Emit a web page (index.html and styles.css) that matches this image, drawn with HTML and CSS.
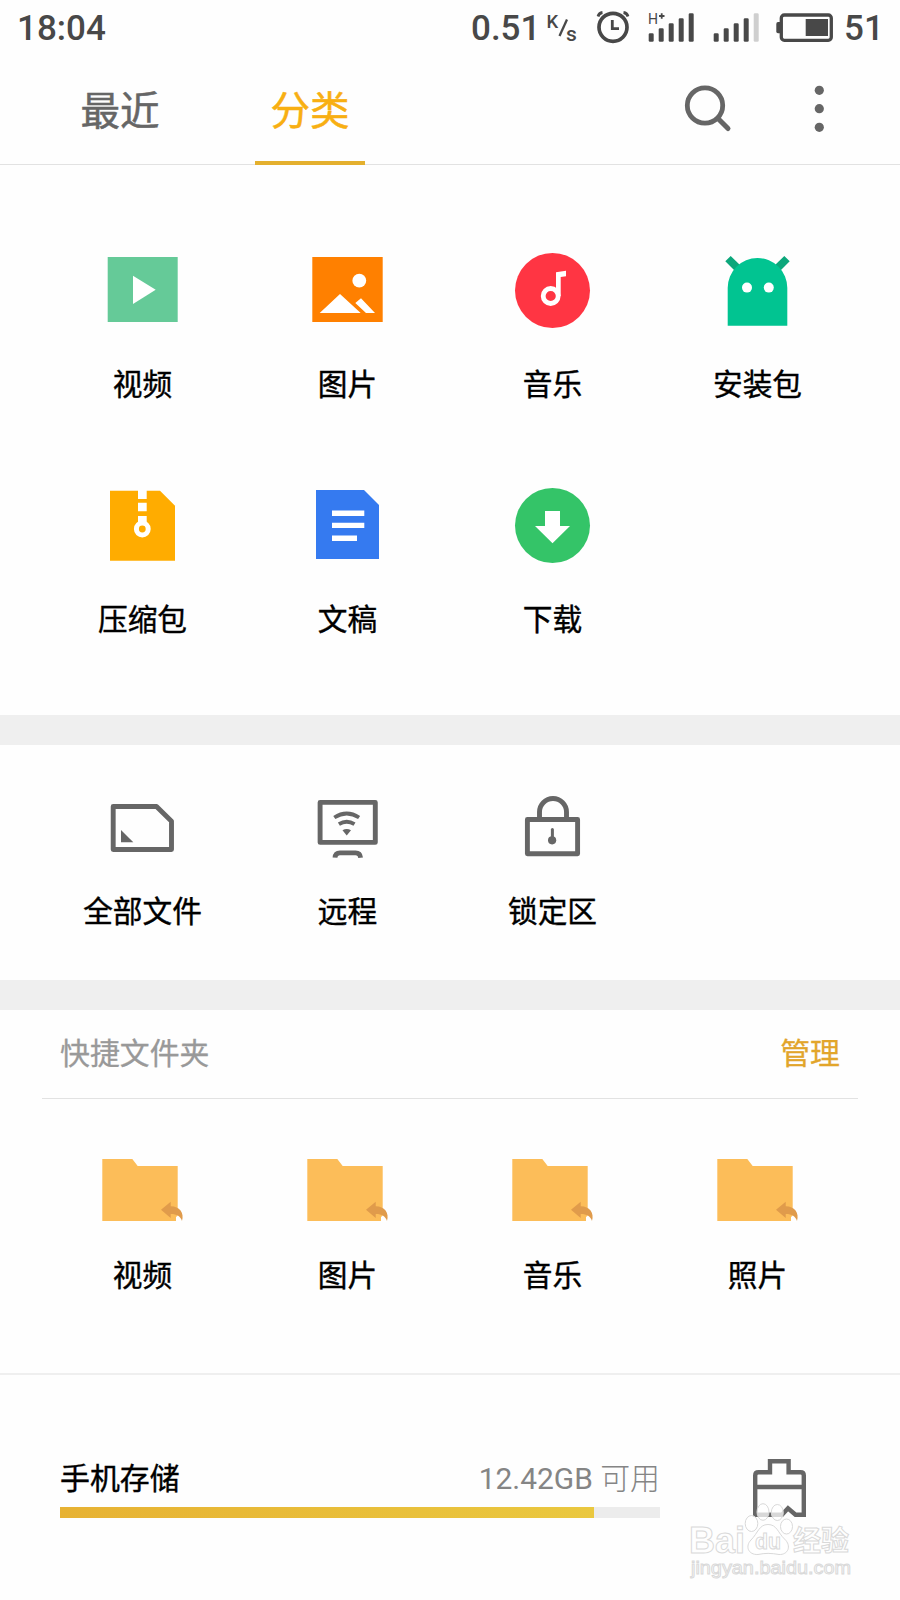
FILE: index.html
```html
<!DOCTYPE html>
<html lang="zh-CN">
<head>
<meta charset="utf-8">
<title>文件管理</title>
<link rel="stylesheet" href="styles.css">
</head>
<body>
<svg class="defs" width="0" height="0" aria-hidden="true">
  <symbol id="folder" viewBox="0 0 101 100">
    <path fill="#fcbd59" d="M10.300 19H40.300L45.700 26H85.700V81H10.300Z"/>
    <path fill="#fff" d="M84 77L86 75.500L90 81.500H84Z"/>
    <path fill="#e09b4b" d="M69 69.800L78.700 61.700V66.300C87.500 66.300 92.500 73 90 81C88.500 76.300 85 74 78.700 74V78Z"/>
  </symbol>
</svg>
<div class="screen">
  <header class="status">
    <span class="clock">18:04</span>
    <div class="status-right">
      <span class="rate">0.51</span>
      <svg width="46" height="56" viewBox="540 0 46 56">
        <text class="unit" x="546.500" y="27.500" font-size="18.500">K</text>
        <path d="M559.500 36L567 19.500" stroke="#484848" stroke-width="2.300"/>
        <text class="unit" x="566" y="40.500" font-size="21">s</text>
      </svg>
      <svg width="54" height="56" viewBox="586 0 54 56" fill="none" stroke="#484848">
        <circle cx="613" cy="27.300" r="14" stroke-width="3.700"/>
        <path d="M612.300 20V28.700H619" stroke-width="2.800"/>
        <path d="M598 16.500Q599 13 602.500 12.500M623.500 12.500Q627 13 628 16.500" stroke-width="2.800"/>
      </svg>
      <svg width="64" height="56" viewBox="640 0 64 56" fill="#484848">
        <text class="unit-thin" x="648" y="23.500" font-size="14">H</text>
        <path d="M659 16H664.500M661.700 13.200V18.700" stroke="#484848" stroke-width="1.800"/>
        <rect x="648.700" y="33.300" width="5" height="8.500" rx="1.300"/>
        <rect x="658.700" y="28.300" width="5" height="13.500" rx="1.300"/>
        <rect x="668.700" y="23.300" width="5" height="18.500" rx="1.300"/>
        <rect x="678.700" y="18.300" width="5" height="23.500" rx="1.300"/>
        <rect x="688.700" y="13.300" width="5" height="28.500" rx="1.300"/>
      </svg>
      <svg width="66" height="56" viewBox="704 0 66 56" fill="#484848">
        <rect x="713.700" y="33.300" width="5" height="8.500" rx="1.300"/>
        <rect x="723.700" y="28.300" width="5" height="13.500" rx="1.300"/>
        <rect x="733.700" y="23.300" width="5" height="18.500" rx="1.300"/>
        <rect x="743.700" y="18.300" width="5" height="23.500" rx="1.300"/>
        <rect x="753.700" y="13.300" width="5" height="28.500" rx="1.300" fill="#cfcfcf"/>
      </svg>
      <svg width="74" height="56" viewBox="770 0 74 56" fill="#484848">
        <rect x="781.300" y="15" width="50" height="25.300" rx="3" fill="none" stroke="#484848" stroke-width="3.300"/>
        <path d="M781 22H778Q776.300 22 776.300 24V31.500Q776.300 33.300 778 33.300H781Z"/>
        <rect x="805.700" y="19" width="22.300" height="17"/>
      </svg>
      <span class="battery">51</span>
    </div>
  </header>

  <nav class="tabs">
    <div class="tab tab-recent">最近</div>
    <div class="tab tab-active">分类</div>
    <div class="actions">
      <svg width="60" height="60" viewBox="680 80 60 60" fill="none" stroke="#666">
        <circle cx="705" cy="105.500" r="17.700" stroke-width="4.800"/>
        <path d="M718 118.500L728 128.500" stroke-width="5" stroke-linecap="round"/>
      </svg>
      <svg width="20" height="60" viewBox="809 80 20 60" fill="#666">
        <circle cx="819.300" cy="90.300" r="4.600"/><circle cx="819.300" cy="108.700" r="4.600"/><circle cx="819.300" cy="127.300" r="4.600"/>
      </svg>
    </div>
  </nav>

  <section class="grid categories">
    <div class="item">
      <svg class="icon" viewBox="0 0 101 100"><path fill="#65ca98" d="M15.700 17H85.700V82H15.700Z"/><path fill="#fff" d="M41 35.700V64L63.700 49.700Z"/></svg>
      <span class="label">视频</span>
    </div>
    <div class="item">
      <svg class="icon" viewBox="0 0 101 100"><path fill="#ff8000" d="M15.300 17H85.700V82H15.300Z"/><g fill="#fff"><circle cx="62.300" cy="40.700" r="6.900"/><path d="M22.700 73L43 54L63.700 73ZM58.300 63L64 58.300L78 73H69Z"/></g></svg>
      <span class="label">图片</span>
    </div>
    <div class="item">
      <svg class="icon" viewBox="0 0 101 100"><circle cx="50.500" cy="50.500" r="37.500" fill="#ff3543"/><circle cx="48.700" cy="56" r="7.500" fill="none" stroke="#fff" stroke-width="4.800"/><path fill="#fff" d="M54 32.300L64 30.700V36.300L58.700 37V56H54Z"/></svg>
      <span class="label">音乐</span>
    </div>
    <div class="item">
      <svg class="icon" viewBox="0 0 101 100"><path fill="#0ca77b" d="M18.300 21.300L23.700 16L33 25L27.500 30.500ZM82.700 21.300L77.300 16L68 25L73.500 30.500Z"/><path fill="#01c491" d="M20.700 85.700V47.800A29.800 29.800 0 0 1 80.300 47.800V85.700Z"/><g fill="#fff"><circle cx="40" cy="47.600" r="5"/><circle cx="61.800" cy="47.600" r="5"/></g></svg>
      <span class="label">安装包</span>
    </div>
    <div class="item">
      <svg class="icon" viewBox="0 0 101 100"><path fill="#ffac00" d="M18 15.700H68L83 30.700V85.700H18Z"/><path fill="#fff" d="M46 15H54.700V24H46ZM46 27.800H54.700V36.300H46ZM46 41H54.700V50H46Z"/><circle cx="50.300" cy="54" r="5.900" fill="#ffac00" stroke="#fff" stroke-width="5"/></svg>
      <span class="label">压缩包</span>
    </div>
    <div class="item">
      <svg class="icon" viewBox="0 0 101 100"><path fill="#357af0" d="M19 15H67L82 30V84H19Z"/><path fill="#fff" d="M35 35.500H67.300V41H35ZM35 47.700H67.300V53H35ZM35 60.500H60V66H35Z"/></svg>
      <span class="label">文稿</span>
    </div>
    <div class="item">
      <svg class="icon" viewBox="0 0 101 100"><circle cx="50.500" cy="50.500" r="37.500" fill="#34c468"/><path fill="#fff" d="M43 36H58V51H68L50.500 68.300L33 51H43Z"/></svg>
      <span class="label">下载</span>
    </div>
  </section>

  <section class="grid places">
    <div class="item">
      <svg class="icon" viewBox="0 0 101 100"><path fill="none" stroke="#666" stroke-width="4.900" stroke-linejoin="round" d="M21.200 26.500H64.500L79.500 41.300V69.500H21.200Z"/><path fill="#666" d="M29 50V62.300H41.300Z"/></svg>
      <span class="label">全部文件</span>
    </div>
    <div class="item">
      <svg class="icon" viewBox="0 0 101 100" fill="none" stroke="#666"><rect x="23.100" y="22.400" width="55.200" height="40" stroke-width="4.900" stroke-linejoin="round"/><path stroke-width="3.800" d="M37.300 37.500Q49.700 29.500 62.100 37.500M41.900 44.200Q49.700 39.300 57.500 44.200"/><path fill="#666" stroke="none" d="M45.500 50.300Q49.700 47.800 54 50.300L49.700 55.500Z"/><path stroke-width="4.800" d="M38 77.700Q38.300 72.800 43 72.800H58.500Q63.200 72.800 63.600 77.700"/></svg>
      <span class="label">远程</span>
    </div>
    <div class="item">
      <svg class="icon" viewBox="0 0 101 100" fill="none" stroke="#666" stroke-width="4.900"><rect x="25.400" y="39.500" width="50.200" height="34.200" stroke-linejoin="round"/><path d="M37.500 39V32A13.500 13.500 0 0 1 64.500 32V39"/><path stroke-width="3" stroke-linecap="round" d="M50.400 49.500V60"/><circle cx="50.100" cy="60.300" r="4.100" fill="#666" stroke="none"/></svg>
      <span class="label">锁定区</span>
    </div>
  </section>

  <section class="shortcuts">
    <div class="shortcuts-head">
      <span>快捷文件夹</span>
      <span class="manage">管理</span>
    </div>
    <div class="grid folders">
      <div class="item"><svg class="icon"><use href="#folder"/></svg><span class="label">视频</span></div>
      <div class="item"><svg class="icon"><use href="#folder"/></svg><span class="label">图片</span></div>
      <div class="item"><svg class="icon"><use href="#folder"/></svg><span class="label">音乐</span></div>
      <div class="item"><svg class="icon"><use href="#folder"/></svg><span class="label">照片</span></div>
    </div>
  </section>

  <footer class="storage">
    <div class="storage-info">
      <div class="storage-text">
        <span class="storage-name">手机存储</span>
        <span class="storage-free">12.42GB <span class="thin">可用</span></span>
      </div>
      <div class="bar"><div class="bar-fill" style="width:89%"></div></div>
    </div>
    <svg class="clean" width="60" height="64" viewBox="750 1456 60 64" fill="none" stroke="#666" stroke-width="4.400">
      <path d="M755.200 1516.700V1475.500Q755.200 1472.300 758.500 1472.300H770V1461.200H788.600V1472.300H800.500Q803.800 1472.300 803.800 1475.500V1514.700H795.500L788 1508.300L782 1514.700H755.200M755.200 1487H803.800"/>
    </svg>
    <svg class="watermark" width="170" height="84" viewBox="686 1500 170 84">
      <g fill="#fff" fill-opacity=".75" stroke="#d9d9d9" stroke-width="1">
        <ellipse cx="751.500" cy="1523.500" rx="6.300" ry="8"/>
        <ellipse cx="763" cy="1512" rx="6" ry="8.300"/>
        <ellipse cx="777.300" cy="1512.500" rx="6" ry="8"/>
        <ellipse cx="786.500" cy="1526.500" rx="6" ry="7.500"/>
        <path d="M768 1524.500C777 1524.500 778 1533 784.500 1539C792 1546 788 1555 779 1554.500C771 1553 765 1553 758 1554.500C748 1555 745 1546 751 1540C758 1533 759 1524.500 768 1524.500Z"/>
        <text class="mark-bold" x="689" y="1553" font-size="37" textLength="56" lengthAdjust="spacingAndGlyphs">Bai</text>
        <text class="mark-bold" x="755" y="1549" font-size="22" textLength="26" lengthAdjust="spacingAndGlyphs">du</text>
        <text class="mark-cjk" x="793" y="1550.500" font-size="28" textLength="56" lengthAdjust="spacingAndGlyphs">经验</text>
        <text class="mark-url" x="691" y="1574" font-size="19" textLength="160" lengthAdjust="spacingAndGlyphs">jingyan.baidu.com</text>
      </g>
    </svg>
  </footer>
</div>
</body>
</html>
```
FILE: styles.css
```css
* {
  box-sizing: border-box;
}

body {
  margin: 0;
  background: #fefefe;
  font-family: Roboto, "Noto Sans CJK SC", sans-serif;
}

svg {
  display: block;
  flex: none;
}

.defs {
  position: absolute;
}

.screen {
  position: relative;
  width: 900px;
  height: 1600px;
  overflow: hidden;
  background: #fefefe;
}

/* Status bar */
.status {
  display: flex;
  justify-content: space-between;
  height: 56px;
  padding: 0 18px 0 17px;
  color: #484848;
  font-size: 35px;
  font-weight: 500;
  line-height: 58px;
}

.status-right {
  display: flex;
}

.rate {
  width: 69px;
}

.battery {
  width: 38px;
}

.unit,
.unit-thin {
  font-family: Roboto, sans-serif;
  font-weight: 500;
  fill: #484848;
}

.unit-thin {
  font-weight: 400;
}

/* Tabs */
.tabs {
  display: flex;
  height: 109px;
  padding-left: 65px;
  border-bottom: 1px solid #e2e2e2;
  color: #666;
  font-size: 39.5px;
  line-height: 112px;
}

.tab {
  width: 110px;
  height: 109px;
  text-align: center;
  -webkit-text-stroke: 0.5px currentColor;
}

.tab-active {
  margin-left: 80px;
  border-bottom: 4px solid #e4b02e;
  color: #f8af12;
}

.actions {
  display: flex;
  gap: 69px;
  margin-left: auto;
  padding: 24px 71px 0 0;
}

/* Icon grids */
.grid {
  display: grid;
  grid-template-columns: repeat(4, 205px);
  padding: 0 40px;
}

.item {
  display: flex;
  flex-direction: column;
  align-items: center;
}

.icon {
  width: 101px;
  height: 100px;
}

.label {
  margin-top: 25px;
  color: #000;
  font-size: 29.7px;
  line-height: 40px;
  -webkit-text-stroke: 0.4px currentColor;
}

.categories {
  grid-auto-rows: 235px;
  height: 550px;
  padding-top: 75px;
}

.places {
  height: 295px;
  padding-top: 35px;
  border-top: 30px solid #efefef;
  border-bottom: 30px solid #efefef;
}

.places .label {
  margin-top: 12px;
}

/* Shortcut folders */
.shortcuts {
  height: 365px;
  border-bottom: 2px solid #efefef;
}

.shortcuts-head {
  display: flex;
  justify-content: space-between;
  height: 89px;
  margin: 0 42px;
  padding: 0 18px;
  border-bottom: 1px solid #e2e2e2;
  color: #999;
  font-size: 29.9px;
  line-height: 88px;
  -webkit-text-stroke: 0.3px currentColor;
}

.manage {
  color: #e2a52b;
}

.folders {
  padding-top: 41px;
}

.folders .label {
  margin-top: 16px;
}

/* Storage */
.storage {
  display: flex;
  padding-top: 81px;
  padding-left: 60px;
}

.storage-info {
  width: 600px;
  padding-top: 2px;
}

.storage-text {
  display: flex;
  justify-content: space-between;
  height: 49px;
  font-size: 29.9px;
  line-height: 42px;
}

.storage-name {
  color: #000;
  -webkit-text-stroke: 0.4px currentColor;
}

.storage-free {
  color: #858585;
}

.thin {
  font-weight: 300;
}

.bar {
  height: 11px;
  background: #ececec;
}

.bar-fill {
  height: 100%;
  background: linear-gradient(90deg, #e7b233, #eac83f);
}

.clean {
  margin-left: 90px;
}

.watermark {
  position: absolute;
  left: 686px;
  top: 1500px;
}

.mark-bold {
  font-family: "Liberation Sans", sans-serif;
  font-weight: 700;
}

.mark-cjk {
  font-family: "Noto Sans CJK SC", sans-serif;
  font-weight: 700;
}

.mark-url {
  font-family: "Liberation Sans", sans-serif;
}
```
